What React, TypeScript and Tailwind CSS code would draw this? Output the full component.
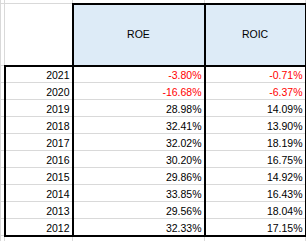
const rows: [string, string, string][] = [
  ['2021', '-3.80%', '-0.71%'],
  ['2020', '-16.68%', '-6.37%'],
  ['2019', '28.98%', '14.09%'],
  ['2018', '32.41%', '13.90%'],
  ['2017', '32.02%', '18.19%'],
  ['2016', '30.20%', '16.75%'],
  ['2015', '29.86%', '14.92%'],
  ['2014', '33.85%', '16.43%'],
  ['2013', '29.56%', '18.04%'],
  ['2012', '32.33%', '17.15%'],
]

const grid = 'border border-[#d9d9d9]'

export default function App() {
  return (
    <div className="w-[306px] h-[241px] overflow-hidden bg-white font-['Liberation_Sans',Arial,sans-serif] text-[10.5px] text-black">
      <table className="border-collapse table-fixed w-[307px] -mt-px">
        <colgroup>
          <col className="w-[4px]" />
          <col className="w-[68px]" />
          <col className="w-[132px]" />
          <col className="w-[101px]" />
          <col className="w-[2px]" />
        </colgroup>
        <tbody>
          <tr className="h-[4px]">
            <td className={grid} />
            <td className={grid} />
            <td className={grid} />
            <td className={grid} />
            <td className={grid} />
          </tr>
          <tr className="h-[62px]">
            <td className={grid} />
            <td className={`${grid} border-b-2 border-b-black`} />
            <td className="border-2 border-black bg-[#ddebf7] text-center align-middle">ROE</td>
            <td className="border-2 border-black bg-[#ddebf7] text-center align-middle">ROIC</td>
            <td className={grid} />
          </tr>
          {rows.map(([year, roe, roic], i) => {
            const last = i === rows.length - 1
            const bottom = last ? 'border-b-2 border-b-black' : 'border-b border-b-[#d9d9d9]'
            return (
              <tr key={year} className="h-[17px] leading-[12px]">
                <td className={grid} />
                <td className={`border-x-2 border-x-black ${bottom} text-right align-bottom pr-[2px] pb-px`}>{year}</td>
                <td className={`border-x-2 border-x-black ${bottom} text-right align-bottom pr-[2px] pb-px ${roe.startsWith('-') ? 'text-[#ff0000]' : ''}`}>{roe}</td>
                <td className={`border-x-2 border-x-black ${bottom} text-right align-bottom pr-[2px] pb-px ${roic.startsWith('-') ? 'text-[#ff0000]' : ''}`}>{roic}</td>
                <td className={grid} />
              </tr>
            )
          })}
          <tr className="h-[20px]">
            <td className={grid} />
            <td className={grid} />
            <td className={grid} />
            <td className={grid} />
            <td className={grid} />
          </tr>
        </tbody>
      </table>
    </div>
  )
}
